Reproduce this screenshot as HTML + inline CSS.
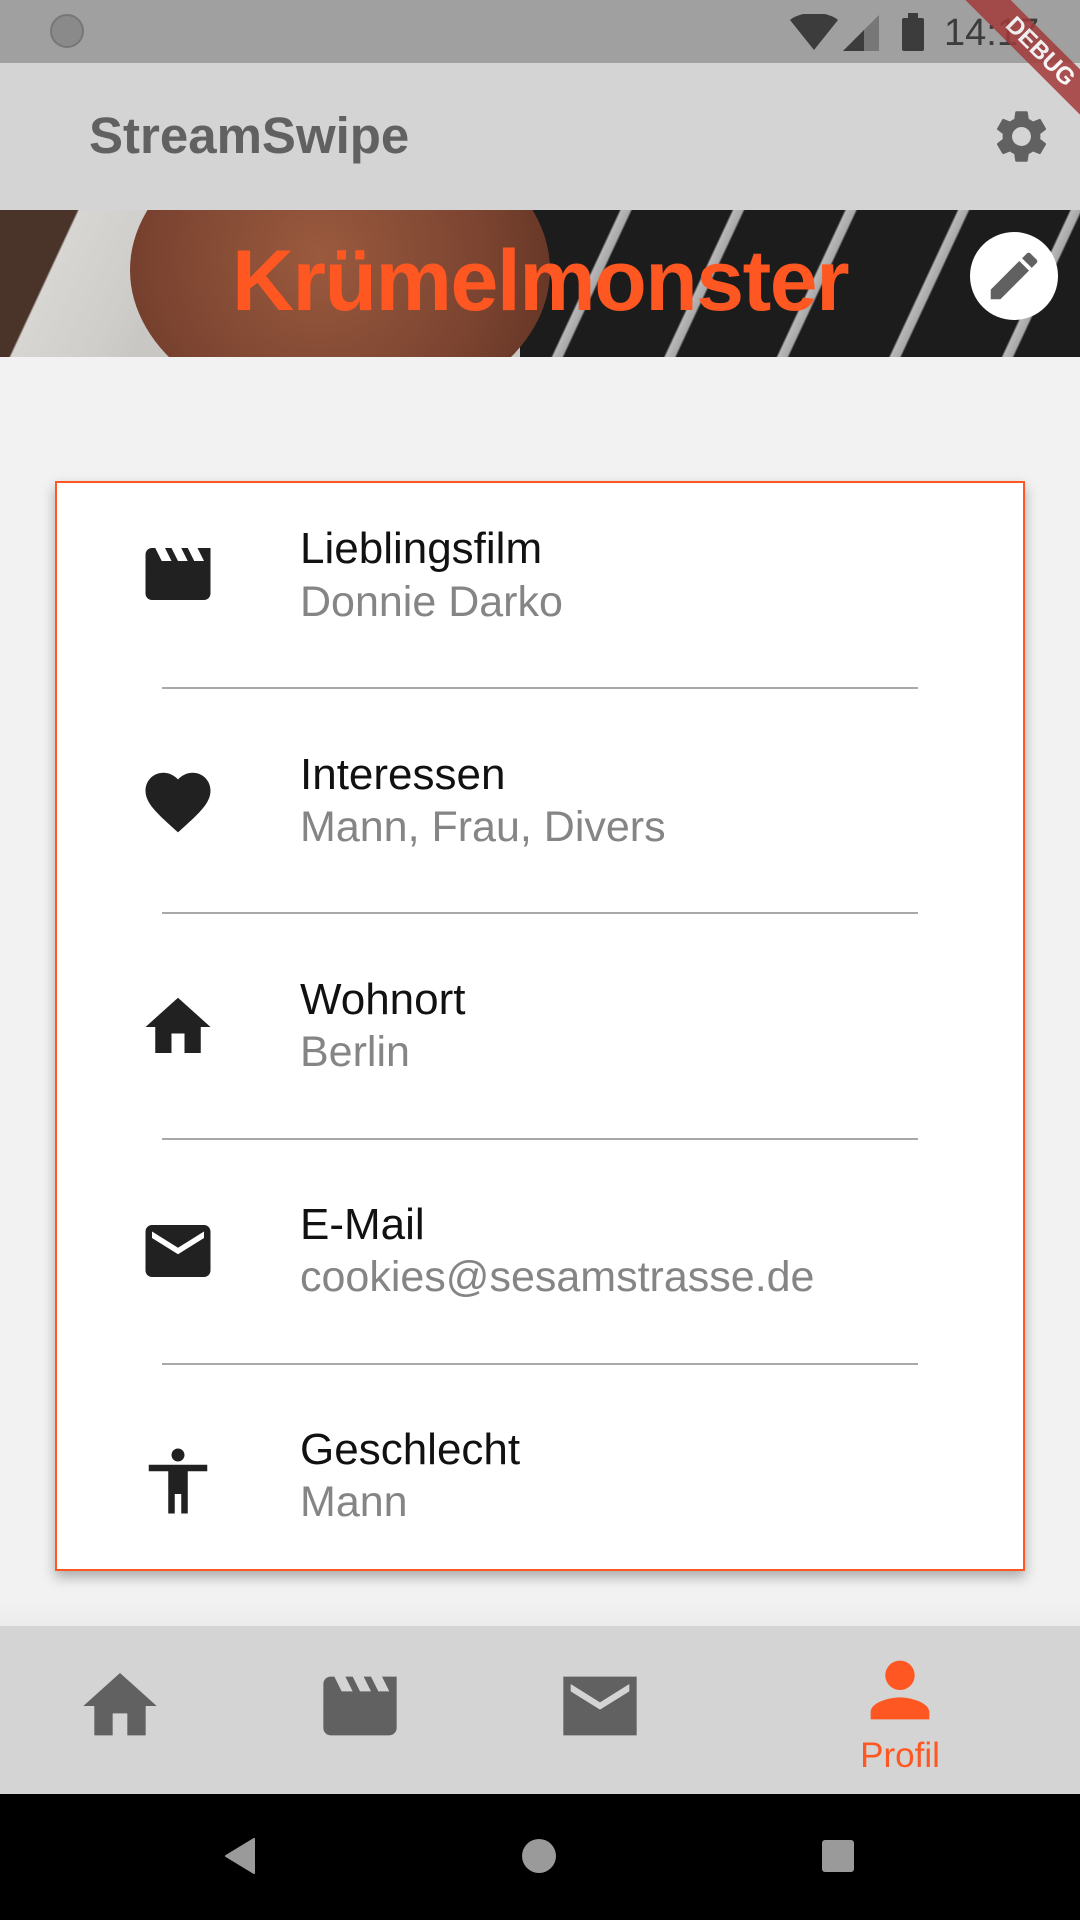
<!DOCTYPE html>
<html><head><meta charset="utf-8"><style>
*{margin:0;padding:0;box-sizing:border-box}
body{width:1080px;height:1920px;position:relative;overflow:hidden;background:#f2f2f2;font-family:"Liberation Sans",Roboto,sans-serif}
.abs{position:absolute}
svg{display:block}
.row-t{position:absolute;left:300px;font-size:44px;color:#111}
.row-s{position:absolute;left:300px;font-size:43px;color:#858585}
.div{position:absolute;left:162px;width:756px;height:1.5px;background:#a8a8a8}
.ic{position:absolute;left:139px;width:78px;height:78px}
</style></head><body>
<!-- status bar -->
<div class="abs" style="left:0;top:0;width:1080px;height:63px;background:#a0a0a0"></div>
<div class="abs" style="left:50px;top:14px;width:34px;height:34px;border-radius:50%;background:#8a8a8a;border:2px solid #777"></div>
<svg class="abs" style="left:790px;top:14px" width="48" height="36" viewBox="0 0 24 18"><path d="M0 3C3 0.5 7.5-0.5 12-0.5S21 0.5 24 3L12 18z" fill="#3c3c3c"/></svg>
<svg class="abs" style="left:843px;top:15px" width="36" height="36" viewBox="0 0 24 24"><path d="M24 0V24H0z" fill="#777"/><path d="M14 10V24H0z" fill="#3c3c3c"/></svg>
<div class="abs" style="left:902px;top:18px;width:22px;height:33px;background:#3c3c3c;border-radius:2px"></div>
<div class="abs" style="left:908px;top:13px;width:10px;height:6px;background:#3c3c3c"></div>
<div class="abs" style="left:944px;top:12px;font-size:38px;color:#3c3c3c">14:17</div>
<!-- app bar -->
<div class="abs" style="left:0;top:63px;width:1080px;height:147px;background:#d4d4d4"></div>
<div class="abs" style="left:89px;top:106px;font-size:51px;font-weight:bold;color:#616161">StreamSwipe</div>
<svg class="abs" style="left:990px;top:105px" width="63" height="63" viewBox="0 0 24 24"><path fill="#616161" d="M19.14 12.94c.04-.3.06-.61.06-.94 0-.32-.02-.64-.07-.94l2.03-1.58c.18-.14.23-.41.12-.61l-1.92-3.32c-.12-.22-.37-.29-.59-.22l-2.39.96c-.5-.38-1.030-.7-1.62-.94l-.36-2.54c-.04-.24-.24-.41-.48-.41h-3.84c-.24 0-.43.17-.47.41l-.36 2.54c-.59.24-1.13.57-1.62.94l-2.39-.96c-.22-.08-.47 0-.59.22L2.740 8.870c-.12.21-.08.47.12.61l2.03 1.58c-.05.3-.09.63-.09.94s.02.64.07.94l-2.03 1.58c-.18.14-.23.41-.12.61l1.92 3.32c.12.22.37.29.59.22l2.39-.96c.5.38 1.03.7 1.620.94l.36 2.54c.05.24.24.41.48.41h3.84c.24 0 .44-.17.47-.41l.36-2.54c.59-.24 1.13-.56 1.62-.94l2.39.96c.22.08.47 0 .59-.22l1.92-3.32c.12-.22.07-.47-.12-.61l-2.01-1.58zM12 15.6c-1.98 0-3.6-1.62-3.6-3.6s1.62-3.6 3.6-3.6 3.6 1.62 3.6 3.6-1.62 3.6-3.6 3.6z"/></svg>
<!-- banner -->
<div class="abs" style="left:0;top:210px;width:1080px;height:147px;overflow:hidden;background:linear-gradient(115deg,#4a3328 0,#4a3328 70px,#d8d6d3 72px,#cfcdca 150px,#c9c7c4 180px)">
  <div class="abs" style="left:520px;top:0;width:600px;height:147px;background:repeating-linear-gradient(115deg,#1c1c1c 0,#1c1c1c 90px,#b8b8b8 92px,#a8a8a8 100px,#1c1c1c 102px)"></div>
  <div class="abs" style="left:130px;top:-90px;width:420px;height:300px;border-radius:50%;background:radial-gradient(circle at 45% 45%,#9a5a3e,#7a4330 60%,#5a2e20)"></div>
</div>
<div class="abs" style="left:0;top:232px;width:1080px;text-align:center;font-size:86px;font-weight:bold;color:#ff5722;letter-spacing:-1.5px">Krümelmonster</div>
<div class="abs" style="left:970px;top:232px;width:88px;height:88px;border-radius:50%;background:#fff"></div>
<svg class="abs" style="left:983px;top:245px" width="62" height="62" viewBox="0 0 24 24"><path fill="#616161" d="M3 17.25V21h3.75L17.81 9.94l-3.75-3.75L3 17.25zM20.71 7.04c.39-.39.39-1.02 0-1.41l-2.34-2.34c-.39-.39-1.02-.39-1.41 0l-1.83 1.83 3.75 3.75 1.83-1.83z"/></svg>
<!-- debug ribbon -->
<div class="abs" style="left:920px;top:36px;width:240px;height:32px;background:#a33a3a;transform:rotate(45deg);color:#fff;font-size:24px;font-weight:bold;text-align:center;line-height:32px;opacity:.85">DEBUG</div>
<!-- card -->
<div class="abs" style="left:55px;top:481px;width:970px;height:1090px;background:#fff;border:2px solid #ff5722;box-shadow:0 6px 12px rgba(0,0,0,.3)"></div>
<svg class="ic" style="top:535px" viewBox="0 0 24 24"><path fill="#212121" d="M18 4l2 4h-3l-2-4h-2l2 4h-3l-2-4H8l2 4H7L5 4H4c-1.1 0-1.99.9-1.99 2L2 18c0 1.1.9 2 2 2h16c1.1 0 2-.9 2-2V4h-4z"/></svg>
<div class="row-t" style="top:524px">Lieblingsfilm</div><div class="row-s" style="top:578px">Donnie Darko</div>
<div class="div" style="top:687px"></div>
<svg class="ic" style="top:763px" viewBox="0 0 24 24"><path fill="#212121" d="M12 21.35l-1.45-1.32C5.4 15.36 2 12.28 2 8.5 2 5.42 4.42 3 7.5 3c1.74 0 3.41.81 4.5 2.09C13.090 3.81 14.760 3 16.5 3 19.58 3 22 5.42 22 8.5c0 3.78-3.4 6.86-8.55 11.54L12 21.35z"/></svg>
<div class="row-t" style="top:750px">Interessen</div><div class="row-s" style="top:803px">Mann, Frau, Divers</div>
<div class="div" style="top:912px"></div>
<svg class="ic" style="top:988px" viewBox="0 0 24 24"><path fill="#212121" d="M10 20v-6h4v6h5v-8h3L12 3 2 12h3v8z"/></svg>
<div class="row-t" style="top:975px">Wohnort</div><div class="row-s" style="top:1028px">Berlin</div>
<div class="div" style="top:1138px"></div>
<svg class="ic" style="top:1212px" viewBox="0 0 24 24"><path fill="#212121" d="M20 4H4c-1.1 0-1.99.9-1.99 2L2 18c0 1.1.9 2 2 2h16c1.1 0 2-.9 2-2V6c0-1.1-.9-2-2-2zm0 4l-8 5-8-5V6l8 5 8-5v2z"/></svg>
<div class="row-t" style="top:1200px">E-Mail</div><div class="row-s" style="top:1253px">cookies@sesamstrasse.de</div>
<div class="div" style="top:1363px"></div>
<svg class="ic" style="top:1442px" viewBox="0 0 24 24"><path fill="#212121" d="M12 2c1.1 0 2 .9 2 2s-.9 2-2 2-2-.9-2-2 .9-2 2-2zm9 7h-6v13h-2v-6h-2v6H9V9H3V7h18v2z"/></svg>
<div class="row-t" style="top:1425px">Geschlecht</div><div class="row-s" style="top:1478px">Mann</div>
<!-- bottom nav -->
<div class="abs" style="left:0;top:1598px;width:1080px;height:28px;background:linear-gradient(#f3f3f3,#ececec)"></div>
<div class="abs" style="left:0;top:1626px;width:1080px;height:168px;background:#d4d4d4"></div>
<svg class="abs" style="left:76px;top:1662px" width="88" height="88" viewBox="0 0 24 24"><path fill="#616161" d="M10 20v-6h4v6h5v-8h3L12 3 2 12h3v8z"/></svg>
<svg class="abs" style="left:316px;top:1662px" width="88" height="88" viewBox="0 0 24 24"><path fill="#616161" d="M18 4l2 4h-3l-2-4h-2l2 4h-3l-2-4H8l2 4H7L5 4H4c-1.1 0-1.99.9-1.99 2L2 18c0 1.1.9 2 2 2h16c1.1 0 2-.9 2-2V4h-4z"/></svg>
<svg class="abs" style="left:556px;top:1662px" width="88" height="88" viewBox="0 0 24 24"><path fill="#616161" d="M22 4H2v16h20zm-2 4l-8 5-8-5V6l8 5 8-5v2z"/></svg>
<svg class="abs" style="left:856px;top:1646px" width="88" height="88" viewBox="0 0 24 24"><path fill="#ff5722" d="M12 12c2.21 0 4-1.79 4-4s-1.790-4-4-4-4 1.79-4 4 1.79 4 4 4zm0 2c-2.67 0-8 1.34-8 4v2h16v-2c0-2.66-5.33-4-8-4z"/></svg>
<div class="abs" style="left:800px;top:1736px;width:200px;text-align:center;font-size:35px;color:#ff5722">Profil</div>
<!-- system nav -->
<div class="abs" style="left:0;top:1794px;width:1080px;height:126px;background:#000"></div>
<svg class="abs" style="left:224px;top:1838px" width="32" height="36" viewBox="0 0 32 36"><path d="M30 1V35L2 18z" fill="#9a9a9a" stroke="#9a9a9a" stroke-width="2" stroke-linejoin="round"/></svg>
<div class="abs" style="left:522px;top:1839px;width:34px;height:34px;border-radius:50%;background:#9a9a9a"></div>
<div class="abs" style="left:822px;top:1840px;width:32px;height:32px;border-radius:3px;background:#9a9a9a"></div>
</body></html>
